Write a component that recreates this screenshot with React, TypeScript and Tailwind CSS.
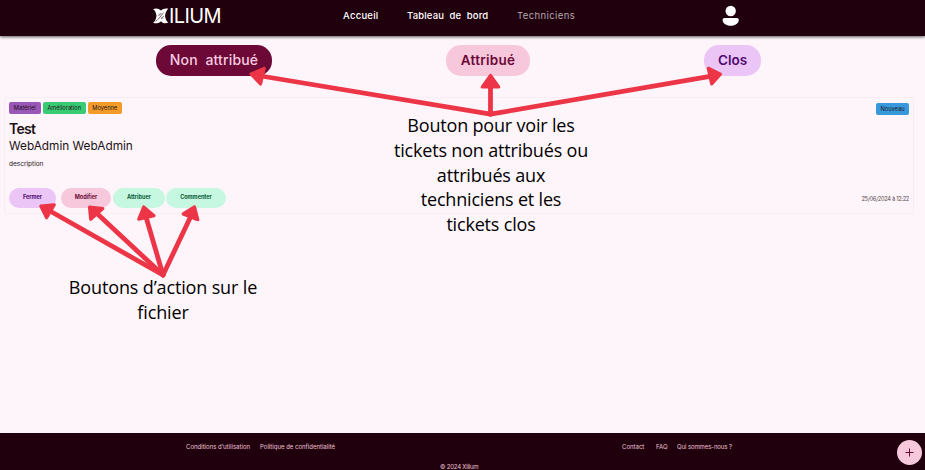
import React from "react";

type Arrow = { line: string; head: string };

const arrows: Arrow[] = [
  { line: "M490.5 114.2L261 76", head: "251,74 264.2,68.5 260.5,84" },
  { line: "M490.5 114.2V84", head: "490.5,75.5 482.3,87 498.7,87" },
  { line: "M490.5 114.2L710 76.3", head: "720.4,74.3 708.3,68.3 711.7,84" },
  { line: "M163 275L50 211", head: "40.8,206.1 54.3,204.8 46.6,217.7" },
  { line: "M163 275L97 213.5", head: "89.5,207 102.8,208.5 90.7,219.2" },
  { line: "M163 275L146 217", head: "143.7,207 154,215.7 138.8,219.2" },
  { line: "M163 275L190.5 217", head: "194.5,206.9 183.2,213.9 197.8,219.7" },
];

function Annotations() {
  return (
    <>
      <svg className="pointer-events-none absolute left-0 top-0" width="925" height="470" viewBox="0 0 925 470" fill="none">
        {arrows.map((a) => (
          <g key={a.head} stroke="#ec3547" strokeLinejoin="round" strokeLinecap="round">
            <path d={a.line} strokeWidth="4.8" />
            <polygon points={a.head} fill="#ec3547" strokeWidth="3.2" />
          </g>
        ))}
      </svg>
      <p className="absolute left-[366px] top-[113px] w-[250px] text-center font-['Open_Sans',sans-serif] text-[18px] leading-[24.8px] tracking-[-0.18px] text-black">
        Bouton pour voir les<br />tickets non attribués ou<br />attribués aux<br />techniciens et les<br />tickets clos
      </p>
      <p className="absolute left-[38px] top-[275px] w-[250px] text-center font-['Open_Sans',sans-serif] text-[18px] leading-[24.8px] tracking-[-0.14px] text-black">
        Boutons d’action sur le<br />fichier
      </p>
    </>
  );
}

function Logo() {
  return (
    <div className="ml-[153px] flex h-8 w-[70px] items-center text-white">
      <svg className="shrink-0" width="16" height="16" viewBox="0 0 16 16">
        <path d="M0 1.2C3.5-.2 5.8.6 8 2.6C10 .8 12 0 15.4.8C13.4 2.3 12.6 4.8 12 7.8C12.5 11 13.4 13.4 15.4 14.6C12 16 9.8 15.2 8 13.2C5.8 15.2 3.4 16 .1 14.8C2.1 13.5 3 11.1 3.5 7.8C3 4.7 2.2 2.3 0 1.2Z" fill="#fff" />
        <path d="M5 11.5L10.6 4.6M2.4 13.3l2-1.4M5.2 8.2L8.3 5M7.8 11l3-3M6 5.6l1 1M9 9.6l1 1" stroke="#21000d" strokeWidth=".6" />
      </svg>
      <span className="text-[20px] font-normal leading-none tracking-[-0.6px]">ILIUM</span>
    </div>
  );
}

export default function App() {
  return (
    <div className="relative flex h-[470px] w-[925px] flex-col overflow-hidden bg-[#fef5fa] font-['Inter',sans-serif] text-[#1b1216]">
      <header className="flex h-9 shrink-0 items-start bg-[#20000d] shadow-[0_1px_3px_rgba(0,0,0,0.65)]">
        <Logo />
        <nav className="flex h-8 items-center text-[9.5px] font-medium text-white">
          <a className="ml-[120px] w-16 whitespace-nowrap tracking-[0.25px]">Accueil</a>
          <a className="w-[110px] whitespace-nowrap tracking-[0.17px]">Tableau&nbsp; de&nbsp; bord</a>
          <a className="w-[58px] whitespace-nowrap font-normal tracking-[0.4px] text-[#b5a8ae]">Techniciens</a>
        </nav>
        <svg className="ml-[147px] mt-[5px]" width="18" height="22" viewBox="0 0 18 22" fill="white">
          <circle cx="8.7" cy="6" r="5.2" />
          <path d="M2.6 13h12.2c1.1 0 2 .8 2 1.8 0 3.6-3.5 6-8.1 6s-8.1-2.4-8.1-6c0-1 .9-1.8 2-1.8Z" />
        </svg>
      </header>

      <main className="flex flex-1 flex-col">
        <div className="mt-[9px] flex h-[31px] text-[14px] font-semibold">
          <button className="ml-[156px] w-[116px] whitespace-nowrap rounded-[15px] bg-[#6c0936] pb-[2px] font-medium tracking-[0.15px] text-[#f8cbe0]">Non&nbsp; attribué</button>
          <button className="ml-[174px] w-[84px] rounded-[15px] bg-[#f7c7dc] pb-px text-[13.5px] tracking-[0.25px] text-[#6c0936]">Attribué</button>
          <button className="ml-[174px] w-[57px] rounded-[15px] bg-[#eac5f6] pb-px text-[13.5px] text-[#4f0870]">Clos</button>
        </div>

        <article className="ml-1 mt-[21px] flex h-[117px] w-[910px] flex-col rounded-[3px] border border-[#f7edf2] pl-1 pr-1 pt-1">
          <div className="flex h-[13px] items-start gap-[2px] text-[5.7px] text-[#21121a]">
            <span className="flex h-3 w-[31.5px] shrink-0 items-center justify-center rounded-[2px] bg-[#9957b7]">Matériel</span>
            <span className="flex h-3 w-[43.5px] shrink-0 items-center justify-center rounded-[2px] bg-[#38cb73]">Amélioration</span>
            <span className="flex h-3 w-[33.5px] items-center justify-center rounded-[2px] bg-[#f29b29]">Moyenne</span>
            <span className="ml-auto mt-px flex h-3 w-[33px] items-center justify-center rounded-[2px] bg-[#3798db]">Nouveau</span>
          </div>
          <h2 className="mt-[5px] text-[14px] font-semibold leading-[18px] tracking-[-0.7px]">Test</h2>
          <h3 className="text-[11.8px] leading-4">WebAdmin WebAdmin</h3>
          <p className="mt-[6px] text-[6.5px] leading-2">description</p>
          <div className="mt-[20px] flex h-5 text-[5.5px] font-bold">
            <button className="w-[47px] rounded-[10px] bg-[#eac5f6] pb-px text-[#4f0870]">Fermer</button>
            <button className="ml-[5px] w-[50px] rounded-[10px] bg-[#f7c7dc] pb-px text-[#6c0936]">Modifier</button>
            <button className="ml-[2px] w-[52px] rounded-[10px] bg-[#c6f7e1] pb-px text-[#075b37]">Attribuer</button>
            <button className="ml-[1px] w-[60px] rounded-[10px] bg-[#c6f7e1] pb-px text-[#075b37]">Commenter</button>
            <time className="ml-auto pt-[6px] text-[5.7px] font-normal leading-[10px] tracking-[-0.3px] text-[#54494e]">25/06/2024 à 12:22</time>
          </div>
        </article>
      </main>

      <footer className="flex h-[37px] shrink-0 flex-col bg-[#20000d] text-[6px] text-[#f2c3d6]">
        <div className="flex h-[26px] shrink-0 items-center">
          <a className="ml-[186px] w-[74px] whitespace-nowrap">Conditions d’utilisation</a>
          <a className="w-[362px] whitespace-nowrap">Politique de confidentialité</a>
          <a className="w-[34px]">Contact</a>
          <a className="w-[21px]">FAQ</a>
          <a className="whitespace-nowrap tracking-[-0.1px]">Qui sommes-nous ?</a>
        </div>
        <p className="ml-[440px] mt-[4px] leading-2 tracking-[-0.2px]">© 2024 Xilium</p>
      </footer>

      <button className="absolute left-[897px] top-[440px] flex size-[25px] items-center justify-center rounded-full bg-[#f7c7dc]">
        <svg width="9" height="9" viewBox="0 0 9 9" stroke="#6c0936" strokeWidth="1"><path d="M4.5.5v8M.5 4.5h8" /></svg>
      </button>

      <Annotations />
    </div>
  );
}
